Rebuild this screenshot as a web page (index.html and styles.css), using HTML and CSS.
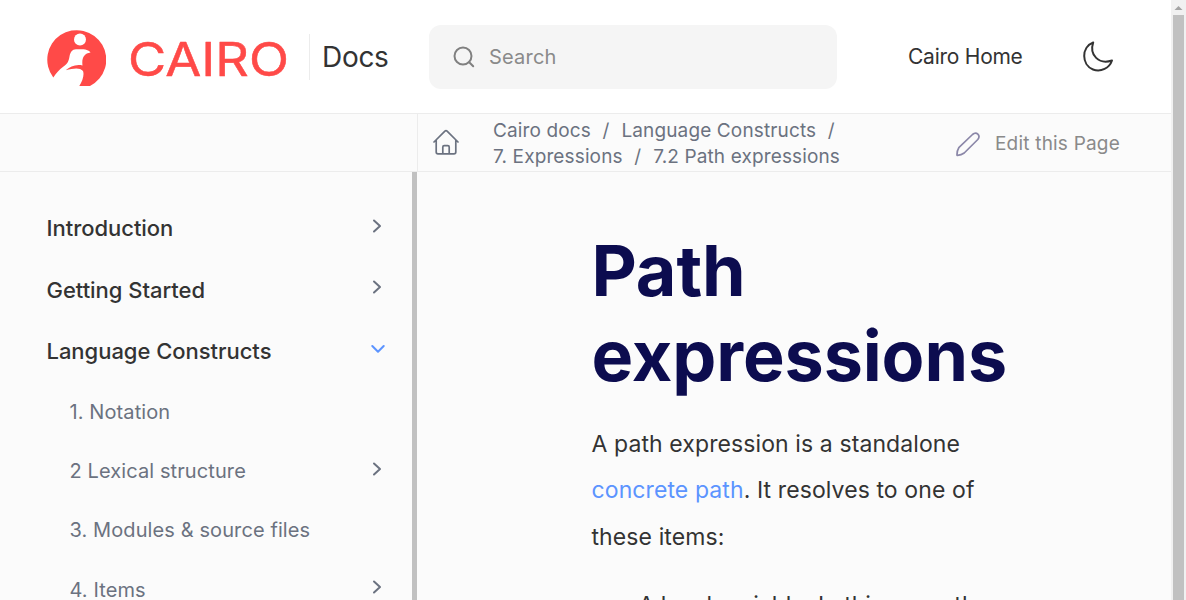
FILE: index.html
```
<!DOCTYPE html>
<html lang="en">
<head>
<meta charset="utf-8">
<title>Path expressions :: Cairo Docs</title>
<link rel="stylesheet" href="styles.css">
</head>
<body>
<div class="window">
<div class="page">
  <header class="header">
    <a class="brand">
      <svg class="mark" viewBox="0 0 60 58" width="60" height="58">
        <path class="red" d="M7.300 49.500A29.500 29.500 0 1 1 44 58H33.300C36.500 53 38.500 47 37 43C34 39.500 28 40 19.700 42.300C24 38.500 30 36 36.500 37.500C35.500 30 38 25.500 44.500 24.500C43 21.500 38 21 30 21.300C26 21.500 24.500 24 23.500 28.500C22.500 34 21.500 35.500 17.500 38.500C13 42 10 45 7.300 49.500Z"/>
        <circle class="white" cx="34" cy="11.500" r="6"/>
      </svg>
      <svg class="wordmark" viewBox="0 0 162 40" width="162" height="40"><text x="-1" y="36" textLength="161" lengthAdjust="spacingAndGlyphs">CAIRO</text></svg>
    </a>
    <div class="docs">Docs</div>
    <div class="search">
      <svg viewBox="0 0 22 22" width="22" height="22"><circle cx="10" cy="10" r="8.500"/><path d="m16.200 16.200 4 4"/></svg>
      <span>Search</span>
    </div>
    <nav class="topnav">Cairo Home</nav>
    <svg class="moon" viewBox="0 0 32 32" width="32" height="32"><path d="M11.200 1.500C-1 6-.5 24 11 28.500C19 31.500 27.500 27 30 19.500C17 24 7 14 11.200 1.500Z"/></svg>
  </header>
  <div class="toolbar">
    <div class="toolbar-side"></div>
    <svg class="home" viewBox="0 0 26 26" width="26" height="26"><path d="M1 13 11.900 2.200q1.100-1 2.200 0L25 13M3.200 11v12q0 1.800 1.800 1.800h16q1.800 0 1.800-1.800V11M9.800 24.500V18q0-1.400 1.400-1.400h3.600q1.400 0 1.400 1.400v6.500"/></svg>
    <div class="crumbs">
      <div><span>Cairo docs</span><i>/</i><span>Language Constructs</span><i>/</i></div>
      <div><span>7. Expressions</span><i>/</i><span>7.2 Path expressions</span></div>
    </div>
    <a class="edit">
      <svg viewBox="0 0 26 26" width="26" height="26"><path d="M2 24.300Q1.800 20 3.800 16.700L17.500 3.500C21.500 0 26 4.500 22.800 8.500L9.200 22Q6 24.500 2 24.300Z"/></svg>
      <span>Edit this Page</span>
    </a>
  </div>
  <div class="body">
    <aside class="sidebar">
      <div class="item top"><span>Introduction</span><svg class="chev" viewBox="0 0 14 14" width="14" height="14"><path d="m4 1.500 6 5.500-6 5.500"/></svg></div>
      <div class="item top"><span>Getting Started</span><svg class="chev" viewBox="0 0 14 14" width="14" height="14"><path d="m4 1.500 6 5.500-6 5.500"/></svg></div>
      <div class="item top"><span>Language Constructs</span><svg class="chev open" viewBox="0 0 14 14" width="14" height="14"><path d="m1.300 4 5.700 5.800L12.700 4"/></svg></div>
      <div class="item sub"><span>1. Notation</span></div>
      <div class="item sub"><span>2 Lexical structure</span><svg class="chev" viewBox="0 0 14 14" width="14" height="14"><path d="m4 1.500 6 5.500-6 5.500"/></svg></div>
      <div class="item sub"><span>3. Modules &amp; source files</span></div>
      <div class="item sub"><span>4. Items</span><svg class="chev" viewBox="0 0 14 14" width="14" height="14"><path d="m4 1.500 6 5.500-6 5.500"/></svg></div>
    </aside>
    <main class="article">
      <h1>Path expressions</h1>
      <p>A path expression is a standalone <a>concrete path</a>. It resolves to one of these items:</p>
      <ul><li>A local variable. In this case, the</li></ul>
    </main>
  </div>
</div>
<div class="scrollbar"><svg viewBox="0 0 15 15" width="15" height="15"><path d="m3.500 10 4-4 4 4Z"/></svg><div class="thumb"></div></div>
</div>
</body>
</html>
```
FILE: styles.css
```
* { box-sizing: border-box; }
body { margin: 0; overflow: hidden; font-family: Inter, sans-serif; color: #333; }
svg { display: block; flex: none; fill: none; stroke-linecap: round; stroke-linejoin: round; }
.window { display: flex; height: 600px; overflow: hidden; background: #fbfbfb; }
.page { width: 1171px; display: flex; flex-direction: column; }
.header { height: 113px; flex: none; background: #fff; display: flex; align-items: flex-start; }
.brand { display: flex; width: 309px; padding: 28px 0 0 46px; }
.red { fill: #ff4a48; }
.white { fill: #fff; }
.wordmark { margin: 12px 0 0 23px; overflow: visible; }
.wordmark text { font: 400 46px Inter, sans-serif; fill: #ff4a48; stroke: #ff4a48; stroke-width: .5; }
.docs { width: 120px; height: 46px; margin-top: 34px; padding-left: 12px; border-left: 1px solid #ececec; font-size: 28px; line-height: 46px; letter-spacing: -.3px; }
.search { width: 408px; height: 64px; margin-top: 25px; padding-left: 24px; border-radius: 12px; background: #f5f5f5; display: flex; align-items: center; gap: 14px; color: #8a8a8a; font-size: 20px; letter-spacing: .2px; }
.search svg { stroke: #808080; stroke-width: 2; }
.topnav { width: 245px; padding: 44px 0 0 71px; font-size: 21px; line-height: 25px; letter-spacing: -.25px; }
.moon { margin-top: 41px; stroke: #333; stroke-width: 2; }
.toolbar { height: 59px; flex: none; border-top: 1px solid #ececec; border-bottom: 1px solid #ececec; display: flex; align-items: center; color: #6b7280; }
.toolbar-side { width: 418px; height: 57px; border-right: 1px solid #ececec; }
.home { margin: -2px 0 0 15px; stroke: #6b7280; stroke-width: 1.7; }
.crumbs { width: 496px; padding: 2px 0 0 34px; font-size: 19px; line-height: 26px; letter-spacing: .13px; white-space: nowrap; }
.crumbs i { font-style: normal; margin: 0 12px 0 11.500px; }
.edit { display: flex; align-items: center; gap: 14px; padding-top: 2px; color: #8a8a8a; font-size: 19px; letter-spacing: .2px; white-space: nowrap; }
.edit svg { stroke: #8b87a8; stroke-width: 1.7; }
.body { flex: 1; display: flex; min-height: 0; }
.sidebar { width: 417px; padding: 25.500px 31px 0 46.500px; border-right: 5px solid #c1c1c1; overflow: hidden; }
.item { display: flex; justify-content: space-between; align-items: center; }
.top { height: 61.500px; font-size: 22px; font-weight: 500; letter-spacing: -.03px; }
.sub { height: 59.400px; padding-left: 23px; font-size: 20px; color: #6b7280; letter-spacing: .1px; }
.chev { margin: -5px -3px 0 0; stroke: #6b7280; stroke-width: 2; }
.open { stroke: #5c94ff; margin-right: -4px; }
.article { padding: 56px 0 0 174.500px; width: 754px; overflow: hidden; }
h1 { margin: 0; width: 430px; font-size: 70px; line-height: 85px; letter-spacing: -.1px; font-weight: 700; color: #0c0c4f; }
p { margin: 23px 0 0; width: 410px; font-size: 23px; line-height: 46.400px; letter-spacing: .1px; }
p a { color: #5c94ff; }
ul { margin: 22px 0 0; padding-left: 47px; list-style: none; font-size: 23px; line-height: 46.500px; }
.scrollbar { width: 15px; padding: 0 2px; background: #f1f1f1; }
.scrollbar svg { margin-left: -2px; fill: #a3a3a3; }
.thumb { height: 585px; width: 11px; background: #c1c1c1; }
```
